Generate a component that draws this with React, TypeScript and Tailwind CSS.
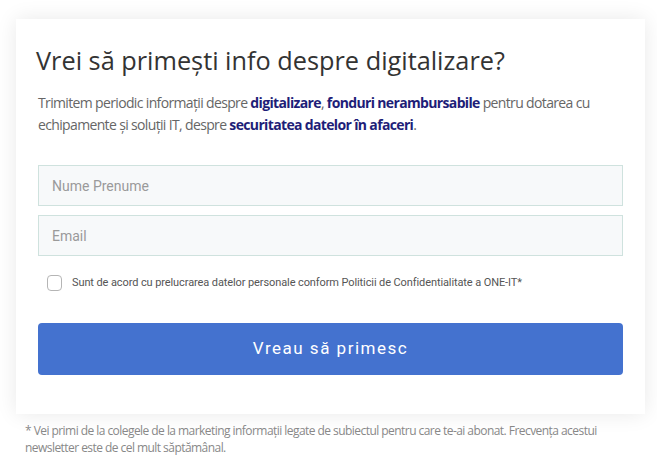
export default function App() {
  return (
    <div className="w-[657px] h-[461px] bg-white pt-[19px] px-[16px] overflow-hidden">
      <div className="w-[629px] bg-white shadow-[0_0_20px_rgba(0,0,0,0.09)] px-[22px] pt-[26px] pb-[39px]">
        <h2 className="text-[25.3px] leading-[30px] text-[#333] font-['Open_Sans',sans-serif] ml-[-2px]">
          Vrei să primești info despre digitalizare?
        </h2>
        <p className="mt-[17px] text-[14px] leading-[22px] text-[#666] font-['Open_Sans',sans-serif] tracking-[-0.65px]">
          Trimitem periodic informații despre <b className="text-[#1e1e78]">digitalizare</b>,{' '}
          <b className="text-[#1e1e78]">fonduri nerambursabile</b> pentru dotarea cu echipamente și soluții IT, despre{' '}
          <b className="text-[#1e1e78]">securitatea datelor în afaceri</b>.
        </p>
        <div className="mt-[29px] flex flex-col gap-[9px]">
          <input
            placeholder="Nume Prenume"
            className="h-[41px] w-full border border-[#cfe2de] bg-[#f7f9fa] px-[13px] text-[14px] text-[#555] placeholder:text-[#9a9a9a] font-['Roboto',sans-serif] outline-none"
          />
          <input
            placeholder="Email"
            className="h-[41px] w-full border border-[#cfe2de] bg-[#f7f9fa] px-[13px] text-[14px] text-[#555] placeholder:text-[#9a9a9a] font-['Roboto',sans-serif] outline-none"
          />
        </div>
        <label className="mt-[19px] ml-[9px] flex items-center gap-[10px]">
          <span className="w-[15px] h-[16px] rounded-[4px] border border-[#b5b5b5] bg-white" />
          <span className="text-[11px] tracking-[-0.1px] text-[#555] font-['Roboto',sans-serif]">
            Sunt de acord cu prelucrarea datelor personale conform Politicii de Confidentialitate a ONE-IT*
          </span>
        </label>
        <button className="mt-[31px] w-full h-[52px] rounded-[4px] bg-[#4472cf] text-white text-[17px] tracking-[1.5px] font-['Roboto',sans-serif]">
          Vreau să primesc
        </button>
      </div>
      <p className="mt-[8px] ml-[9px] text-[12px] leading-[17px] text-[#888] font-['Open_Sans',sans-serif] tracking-[-0.55px]">
        * Vei primi de la colegele de la marketing informații legate de subiectul pentru care te-ai abonat. Frecvența acestui newsletter este de cel mult săptămânal.
      </p>
    </div>
  );
}
